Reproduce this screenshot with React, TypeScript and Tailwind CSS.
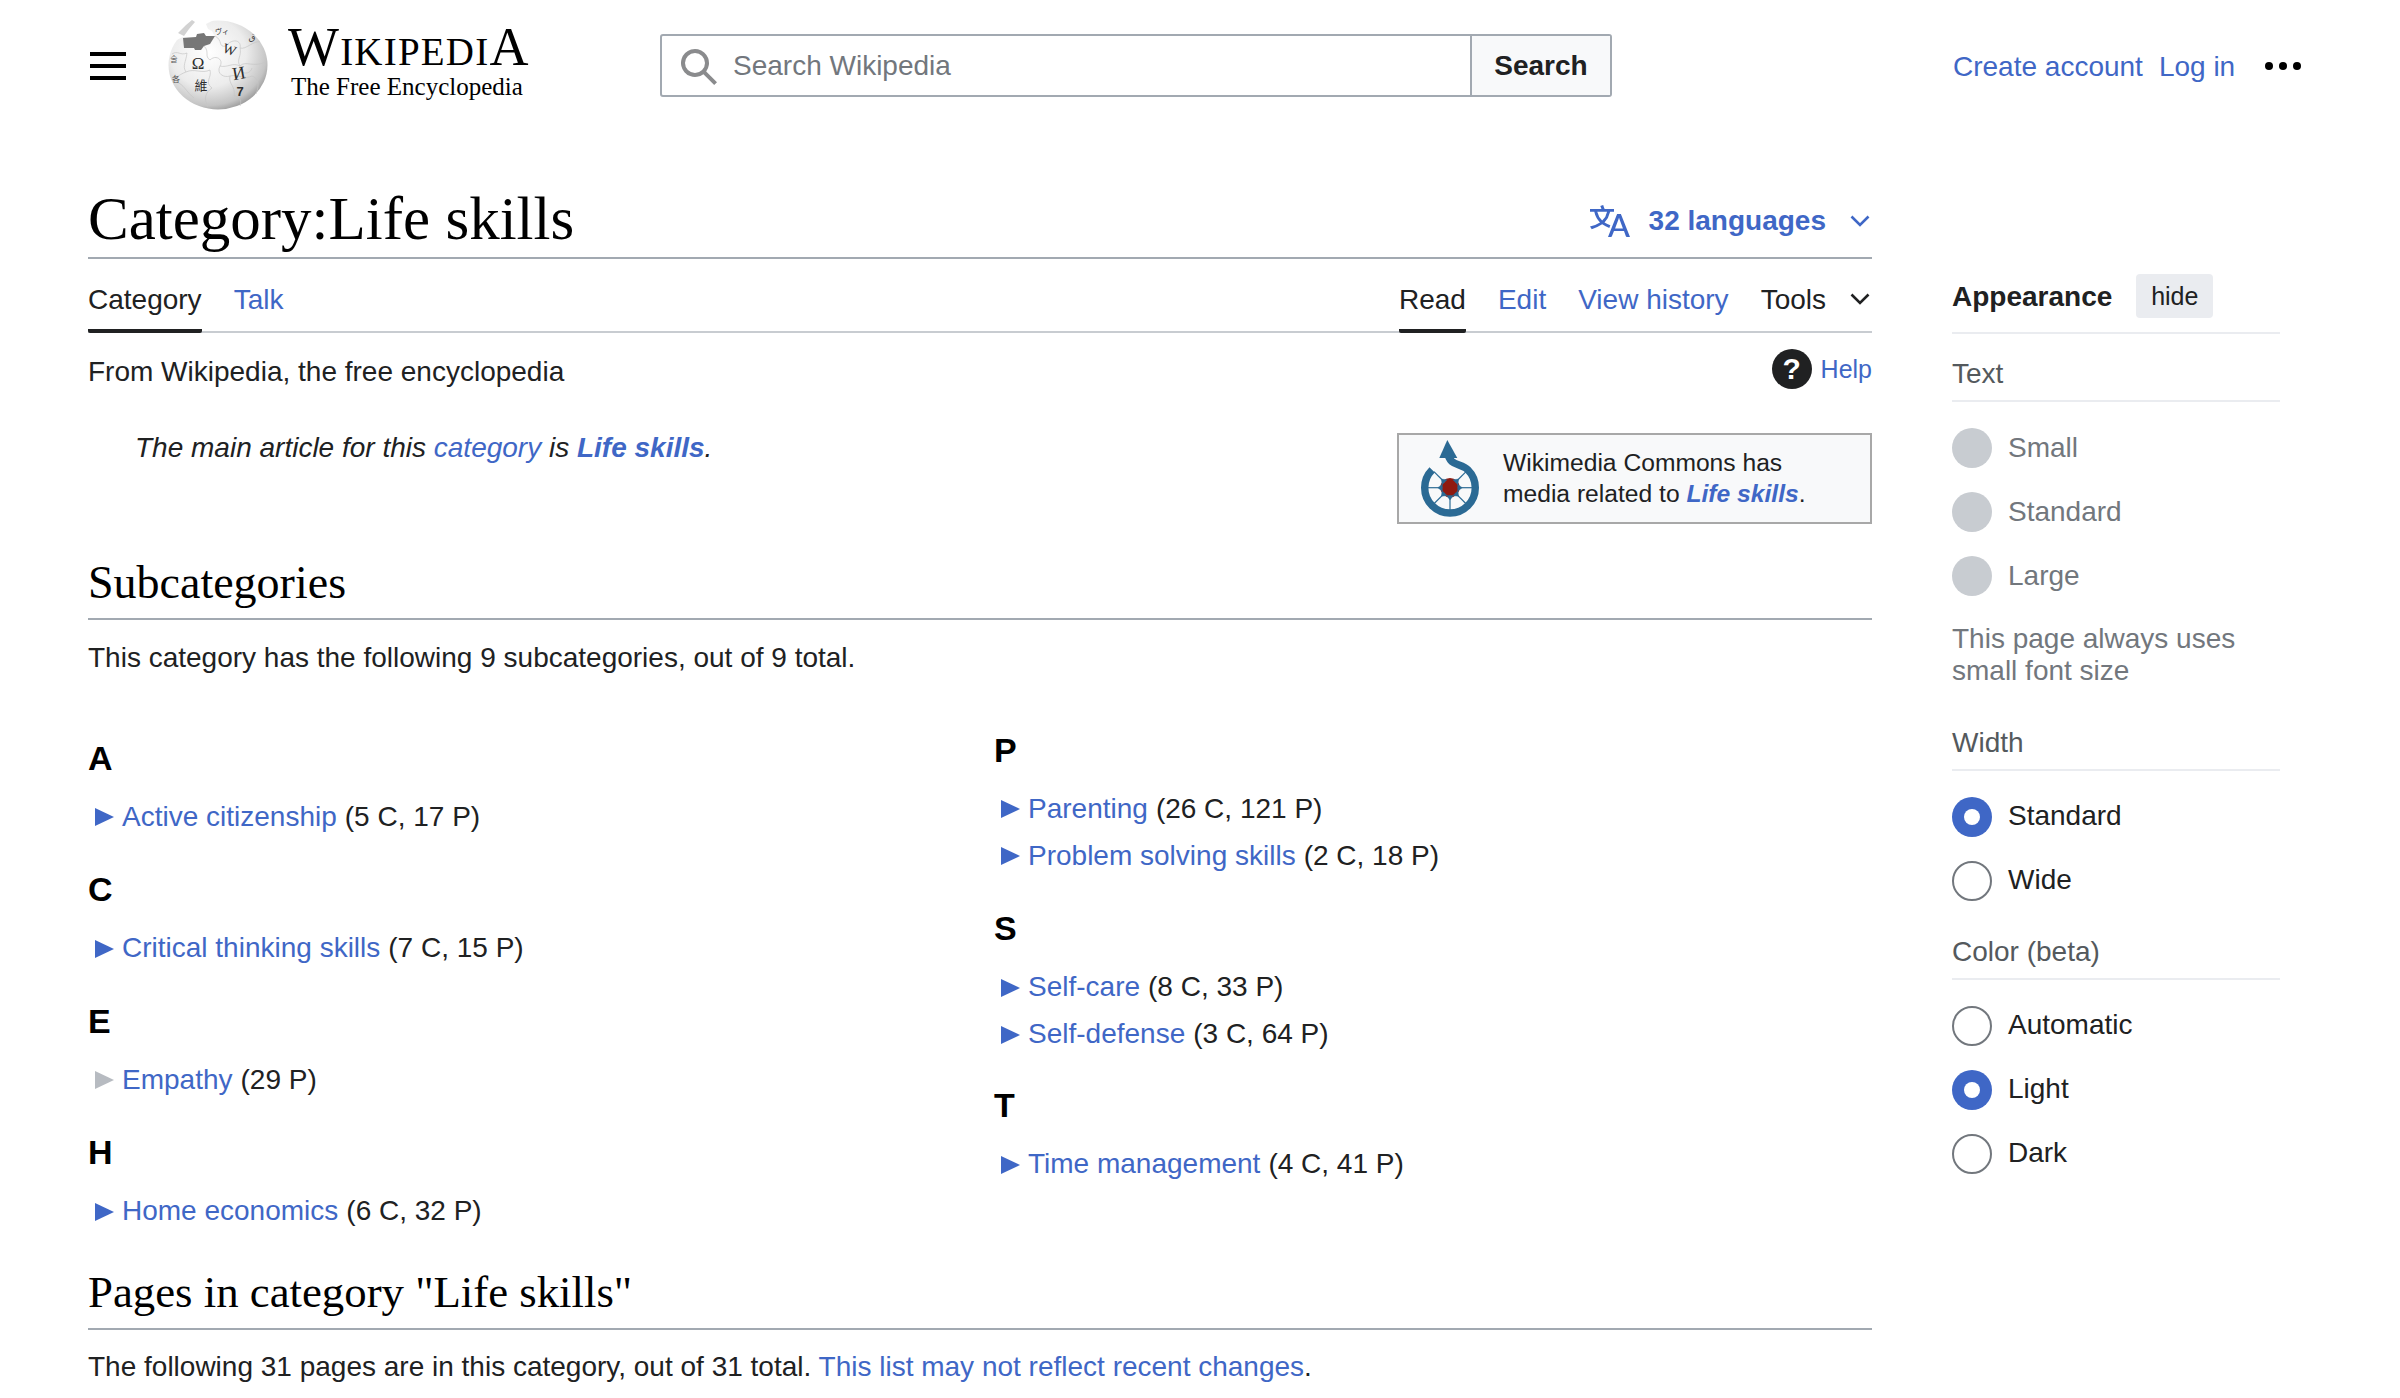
const link = "text-[#3f67c6]";

const Chevron = ({ color = "#3f67c6" }: { color?: string }) => (
  <svg width="20" height="12" viewBox="0 0 20 12" fill="none" stroke={color} strokeWidth="2.6">
    <path d="M1.5 1.5 10 10l8.5-8.5" />
  </svg>
);

const Globe = () => (
  <svg width="100" height="90" viewBox="0 0 100 90" className="shrink-0">
    <defs>
      <radialGradient id="globe" cx="40%" cy="36%" r="70%">
        <stop offset="0%" stopColor="#ffffff" />
        <stop offset="55%" stopColor="#ececec" />
        <stop offset="85%" stopColor="#c4c4c4" />
        <stop offset="100%" stopColor="#8f8f8f" />
      </radialGradient>
    </defs>
    <ellipse cx="50" cy="45" rx="49.5" ry="44.5" fill="url(#globe)" />
    <path d="M0 24 L15 17 L47 17 L44 11 L40 9 L38 4 L46 0 L8 -2 L0 10 Z" fill="#fff" />
    <path d="M18 5 L24 0 L27 2 L21 9 L16 16 L10 13 L13 10 Z" fill="#d2d2d2" />
    <path d="M15 18 L28 17 L29 14 L36 13 L38 16 L47 16 L42 24 L36 26 L33 30 L27 30 L26 28 L16 28 Z" fill="#777" />
    <g fill="none" stroke="#c6c6c6" strokeWidth="0.7">
      <path d="M47 16 C55 20 50 28 58 26 C64 18 74 20 72 28 C78 30 86 20 92 22" />
      <path d="M36 26 C42 32 36 36 42 40 C48 34 56 40 52 46 C60 48 64 42 72 46 C78 40 84 48 98 42" />
      <path d="M4 34 C10 30 12 36 19 33 C18 42 14 46 18 52 C12 54 9 58 4 58" />
      <path d="M18 52 C26 48 34 54 42 50 C44 58 36 62 44 68 C38 72 35 78 40 87" />
      <path d="M52 46 C48 54 56 58 62 56 C60 64 68 66 66 76 C72 76 74 82 72 86" />
      <path d="M72 46 C70 54 82 56 84 48 M84 56 C90 58 92 64 88 74" />
      <path d="M72 28 C74 36 68 40 72 46 M62 56 C70 54 76 60 84 56" />
      <path d="M8 62 C16 64 18 72 26 78" />
    </g>
    <g fill="#2e2e2e" fontFamily="'Liberation Serif', serif" textAnchor="middle">
      <text x="30" y="49" fontSize="17">Ω</text>
      <text x="60" y="34" fontSize="14" transform="rotate(20 60 34)">W</text>
      <text x="72" y="59" fontSize="18" transform="rotate(-10 72 59)">И</text>
      <text x="33" y="70" fontSize="13" fontFamily="'Noto Sans CJK SC', sans-serif">維</text>
      <text x="54" y="14" fontSize="7" fontFamily="'Noto Sans CJK JP', sans-serif">ヴィ</text>
      <text x="72" y="76" fontSize="13" fontWeight="700" fontFamily="'Liberation Sans', sans-serif">7</text>
      <text x="6" y="42" fontSize="8" fill="#555" fontFamily="'Noto Sans CJK KR', sans-serif">술</text>
      <text x="8" y="62" fontSize="8" fill="#555" fontFamily="'Noto Sans CJK SC', sans-serif">各</text>
      <text x="84" y="20" fontSize="9" fill="#444" fontFamily="'DejaVu Sans', sans-serif">ق</text>
    </g>
  </svg>
);

const CommonsLogo = () => (
  <svg width="60" height="78" viewBox="0 0 60 78" className="shrink-0">
    <path d="M12.1 29.8 A25.3 25.3 0 1 0 47.9 29.8 C41 23 29 26 28 13" fill="none" stroke="#2b6a94" strokeWidth="7.4" />
    <path d="M27.3 0 L37.3 18 L19.3 18 Z" fill="#2b6a94" />
    <circle cx="30" cy="47.7" r="9.7" fill="#8f1a10" />
    <g fill="#2b6a94" stroke="#2b6a94">
      {[45, 90, 135, 180, 225, 270, 315].map((deg) => (
        <g key={deg} transform={`rotate(${deg} 30 47.7)`}>
          <path d="M30 35.5 L33.5 40 L26.5 40 Z" strokeWidth="0.4" />
          <path d="M30 40 V25" strokeWidth="1.2" fill="none" />
        </g>
      ))}
    </g>
  </svg>
);

const Radio = ({ label, state }: { label: string; state: "on" | "off" | "disabled" }) => (
  <div className="flex items-center h-[40px] mb-[24px]">
    {state === "on" && (
      <span className="w-[40px] h-[40px] rounded-full bg-[#3f67c6] flex items-center justify-center">
        <span className="w-[16px] h-[16px] rounded-full bg-white" />
      </span>
    )}
    {state === "off" && <span className="w-[40px] h-[40px] rounded-full border-2 border-[#72777d] bg-white" />}
    {state === "disabled" && <span className="w-[40px] h-[40px] rounded-full bg-[#c8ccd1]" />}
    <span className={`ml-[16px] ${state === "disabled" ? "text-[#72777d]" : "text-[#202122]"}`}>{label}</span>
  </div>
);

const SideHeading = ({ children }: { children: string }) => (
  <div className="h-[46px] leading-[36px] text-[#54595d] border-b-2 border-[#eaecf0] mb-[26px]">{children}</div>
);

const Sub = ({ name, count, empty }: { name: string; count: string; empty?: boolean }) => (
  <div className="flex items-center h-[47px] pl-[7px]">
    <svg width="19" height="18" viewBox="0 0 19 18" className="shrink-0 mr-[8px]">
      <path d="M0 0 L19 9 L0 18 Z" fill={empty ? "#b7bbc1" : "#3f67c6"} />
    </svg>
    <span className={link}>{name}</span>
    <span className="ml-[8px]">{count}</span>
  </div>
);

const Letter = ({ children }: { children: string }) => (
  <h3 className="text-[34px] font-bold text-black leading-[40px] mb-[16px]">{children}</h3>
);

export default function App() {
  return (
    <div className="h-[1398px] overflow-hidden bg-white text-[28px] leading-[44.8px] text-[#202122] font-['Liberation_Sans',Arial,sans-serif]">
      <header className="flex items-start h-[160px] pl-[88px]">
        <svg width="40" height="40" viewBox="0 0 20 20" className="mt-[46px] shrink-0">
          <path d="M1 3h18v2H1zm0 6h18v2H1zm0 6h18v2H1z" fill="#000" />
        </svg>
        <div className="mt-[20px] ml-[40px]">
          <Globe />
        </div>
        <div className="ml-[20px] mt-[23px] w-[240px] font-['Liberation_Serif',serif] text-black">
          <div className="h-[48px] leading-[48px] whitespace-nowrap text-[39px] tracking-[1.2px]">
            <span className="text-[54px]">W</span>IKIPEDI<span className="text-[54px]">A</span>
          </div>
          <div className="text-[25px] leading-[30px] ml-[3px] mt-[1px] whitespace-nowrap">The Free Encyclopedia</div>
        </div>
        <div className="ml-[132px] mt-[34px] flex w-[952px] h-[63px] border-2 border-[#a2a9b1] rounded-[3px]">
          <div className="flex-1 flex items-center pl-[17px] pt-[2px] border-r-2 border-[#a2a9b1]">
            <svg width="40" height="40" viewBox="0 0 20 20" className="shrink-0">
              <path d="M12.2 13.6a7 7 0 1 1 1.4-1.4l5.4 5.4-1.4 1.4zM3 8a5 5 0 1 0 10 0A5 5 0 0 0 3 8" fill="#8a8b8d" />
            </svg>
            <span className="ml-[14px] text-[#72777d]">Search Wikipedia</span>
          </div>
          <div className="w-[138px] pt-[2px] bg-[#f8f9fa] flex items-center justify-center font-bold">Search</div>
        </div>
        <div className="ml-[341px] mt-[45px] flex items-start">
          <span className={link}>Create account</span>
          <span className={`${link} ml-[16px]`}>Log in</span>
          <svg width="40" height="40" viewBox="0 0 20 20" className="ml-[28px] mt-[1px] shrink-0" fill="#000">
            <circle cx="3" cy="10" r="2" />
            <circle cx="10" cy="10" r="2" />
            <circle cx="17" cy="10" r="2" />
          </svg>
        </div>
      </header>

      <div className="flex pl-[88px]">
        <main className="w-[1784px] shrink-0">
          <div className="flex items-center justify-between h-[99px] pt-[20px] border-b-2 border-[#a2a9b1]">
            <h1 className="font-['Liberation_Serif',serif] text-black text-[61px] leading-[70px]">Category:Life skills</h1>
            <div className="flex items-center mt-[6px]">
              <svg width="40" height="40" viewBox="0 0 20 20" fill="#3f67c6" className="shrink-0">
                <path d="M20 18h-1.44a.6.6 0 0 1-.4-.12.8.8 0 0 1-.23-.31L17 15h-5l-1 2.54a.8.8 0 0 1-.22.3.6.6 0 0 1-.4.14H9l4.55-11.47h1.89zm-3.53-4.31L14.89 9.5a12 12 0 0 1-.39-1.24q-.09.37-.19.69l-.19.56-1.58 4.19zm-6.3-1.58a13.4 13.4 0 0 1-2.91-1.41 11.46 11.46 0 0 0 2.81-5.37H12V4H7.31a4 4 0 0 0-.2-.56C6.87 2.79 6.6 2 6.6 2l-1.47.5s.4.89.6 1.5H0v1.33h2.15A11.23 11.23 0 0 0 5 10.7a17.2 17.2 0 0 1-5 2.1q.56.82.87 1.38a23.3 23.3 0 0 0 5.22-2.51 15.6 15.6 0 0 0 3.56 1.77zM3.63 5.33h4.91a8.1 8.1 0 0 1-2.45 4.45 9.1 9.1 0 0 1-2.46-4.45" />
              </svg>
              <span className={`${link} font-bold ml-[19px]`}>32 languages</span>
              <span className="ml-[24px] mr-[2px]">
                <Chevron />
              </span>
            </div>
          </div>

          <nav className="flex justify-between h-[74px] border-b-2 border-[#c8ccd1]">
            <div className="flex">
              <span className="h-[74px] pt-[19px] border-b-4 border-[#202122] rounded-b-[2px]">Category</span>
              <span className={`${link} ml-[32px] pt-[19px]`}>Talk</span>
            </div>
            <div className="flex items-start">
              <span className="h-[74px] pt-[19px] border-b-4 border-[#202122] rounded-b-[2px]">Read</span>
              <span className={`${link} ml-[32px] pt-[19px]`}>Edit</span>
              <span className={`${link} ml-[32px] pt-[19px]`}>View history</span>
              <span className="ml-[32px] pt-[19px]">Tools</span>
              <span className="ml-[24px] mr-[2px] mt-[34px]">
                <Chevron color="#202122" />
              </span>
            </div>
          </nav>

          <div className="flex justify-between items-start mt-[17px] h-[44px]">
            <span>From Wikipedia, the free encyclopedia</span>
            <span className="flex items-center mt-[-3px]">
              <span className="w-[40px] h-[40px] rounded-full bg-[#202122] text-white font-bold flex items-center justify-center text-[30px]">?</span>
              <span className={`${link} text-[25px] ml-[9px]`}>Help</span>
            </span>
          </div>

          <div className="flex justify-between items-start mt-[21px]">
            <p className="pl-[47px] mt-[11px] italic">
              The main article for this <span className={link}>category</span> is{" "}
              <span className={`${link} font-bold`}>Life skills</span>.
            </p>
            <div className="w-[475px] h-[91px] mt-[18px] border-2 border-[#a8a8a8] bg-[#f8f9fa] flex items-center pl-[21px] text-[24.64px] leading-[31px]">
              <CommonsLogo />
              <div className="ml-[23px] mt-[-1px]">
                Wikimedia Commons has
                <br />
                media related to <span className={`${link} font-bold italic`}>Life skills</span>.
              </div>
            </div>
          </div>

          <h2 className="font-['Liberation_Serif',serif] text-black text-[46px] leading-[60px] mt-[29px] h-[67px] border-b-2 border-[#a2a9b1]">
            Subcategories
          </h2>
          <p className="mt-[16px]">This category has the following 9 subcategories, out of 9 total.</p>

          <div className="grid grid-cols-[906px_1fr] mt-[47px]">
            <div className="pt-[10px]">
              <Letter>A</Letter>
              <Sub name="Active citizenship" count="(5 C, 17 P)" />
              <div className="mt-[28.5px]">
                <Letter>C</Letter>
                <Sub name="Critical thinking skills" count="(7 C, 15 P)" />
              </div>
              <div className="mt-[28.5px]">
                <Letter>E</Letter>
                <Sub name="Empathy" count="(29 P)" empty />
              </div>
              <div className="mt-[28.5px]">
                <Letter>H</Letter>
                <Sub name="Home economics" count="(6 C, 32 P)" />
              </div>
            </div>
            <div className="pt-[2px]">
              <Letter>P</Letter>
              <Sub name="Parenting" count="(26 C, 121 P)" />
              <Sub name="Problem solving skills" count="(2 C, 18 P)" />
              <div className="mt-[28.5px]">
                <Letter>S</Letter>
                <Sub name="Self-care" count="(8 C, 33 P)" />
                <Sub name="Self-defense" count="(3 C, 64 P)" />
              </div>
              <div className="mt-[27px]">
                <Letter>T</Letter>
                <Sub name="Time management" count="(4 C, 41 P)" />
              </div>
            </div>
          </div>

          <h2 className="font-['Liberation_Serif',serif] text-black text-[44.8px] leading-[60px] mt-[27px] h-[68px] border-b-2 border-[#a2a9b1]">
            Pages in category "Life skills"
          </h2>
          <p className="mt-[15px]">
            The following 31 pages are in this category, out of 31 total.{" "}
            <span className={link}>This list may not reflect recent changes</span>.
          </p>
        </main>

        <aside className="w-[328px] ml-[80px] mt-[116px] shrink-0">
          <div className="flex items-center h-[58px] border-b-2 border-[#eaecf0] pb-[14px]">
            <span className="font-bold">Appearance</span>
            <span className="ml-[24px] mt-[-2px] w-[77px] h-[44px] bg-[#eaecf0] rounded-[4px] flex items-center justify-center text-[25px]">hide</span>
          </div>
          <div className="mt-[22px]">
            <SideHeading>Text</SideHeading>
            <Radio label="Small" state="disabled" />
            <Radio label="Standard" state="disabled" />
            <Radio label="Large" state="disabled" />
            <p className="text-[#72777d] leading-[32px] mt-[26.5px] mb-[38px]">
              This page always uses
              <br />
              small font size
            </p>
            <SideHeading>Width</SideHeading>
            <Radio label="Standard" state="on" />
            <Radio label="Wide" state="off" />
            <div className="mt-[33px]">
              <SideHeading>Color (beta)</SideHeading>
            </div>
            <Radio label="Automatic" state="off" />
            <Radio label="Light" state="on" />
            <Radio label="Dark" state="off" />
          </div>
        </aside>
      </div>
    </div>
  );
}
